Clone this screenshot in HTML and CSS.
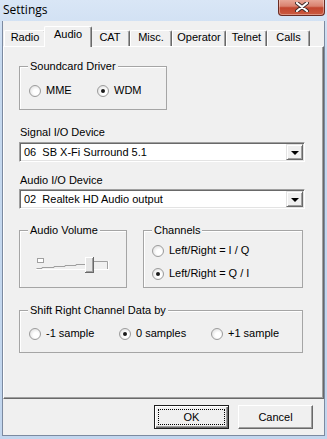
FILE: index.html
```html
<!DOCTYPE html>
<html lang="en">
<head>
    <meta charset="UTF-8">
    <meta name="viewport" content="width=device-width, initial-scale=1.0">
    <title>Settings</title>
    <link rel="stylesheet" href="styles.css">
</head>
<body>
    <div class="window">
        <div class="titlebar">
            <span class="title">Settings</span>
            <div class="close-btn">
                <svg width="14" height="10" viewBox="0 0 14 10">
                    <path d="M2 1 L12 9 M12 1 L2 9" stroke="#3b2a2a" stroke-width="4" stroke-linecap="round"/>
                    <path d="M2 1 L12 9 M12 1 L2 9" stroke="#ffffff" stroke-width="2.2" stroke-linecap="round"/>
                </svg>
            </div>
        </div>

        <div class="client">
            <div class="tabs">
                <div class="tab w-radio">Radio</div>
                <div class="tab active w-audio">Audio</div>
                <div class="tab w-cat">CAT</div>
                <div class="tab w-misc">Misc.</div>
                <div class="tab w-operator">Operator</div>
                <div class="tab w-telnet">Telnet</div>
                <div class="tab w-calls">Calls</div>
            </div>

            <div class="panel">
                <div class="group driver">
                    <span class="group-title">Soundcard Driver</span>
                    <div class="radio-row">
                        <label class="radio w68"><span class="circle"></span>MME</label>
                        <label class="radio checked"><span class="circle"></span>WDM</label>
                    </div>
                </div>

                <div class="field-label">Signal I/O Device</div>
                <div class="combo">
                    <span class="combo-text">06  SB X-Fi Surround 5.1</span>
                    <span class="combo-btn"><i class="arrow"></i></span>
                </div>

                <div class="field-label second">Audio I/O Device</div>
                <div class="combo tight">
                    <span class="combo-text">02  Realtek HD Audio output</span>
                    <span class="combo-btn"><i class="arrow"></i></span>
                </div>

                <div class="group-row">
                    <div class="group volume">
                        <span class="group-title">Audio Volume</span>
                        <svg class="slider" width="74" height="16" viewBox="0 0 74 16">
                            <!-- left end box -->
                            <rect x="1.5" y="1.5" width="6" height="4" fill="#ffffff" stroke="#a0a0a0"/>
                            <!-- tapered track -->
                            <polyline points="0.5,11.5 6,11.5 6,10.5 18,10.5 18,9.5 29,9.5 29,8.5 40,8.5 40,7.5 50,7.5" fill="none" stroke="#a0a0a0"/>
                            <line x1="0" y1="12.5" x2="72" y2="12.5" stroke="#ffffff"/>
                            <polyline points="57,4.5 71.5,4.5 71.5,12" fill="none" stroke="#a0a0a0"/>
                            <line x1="72.5" y1="4" x2="72.5" y2="13" stroke="#ffffff"/>
                            <!-- thumb -->
                            <rect x="49" y="0" width="9" height="16" fill="#696969"/>
                            <rect x="49" y="0" width="8" height="15" fill="#ffffff"/>
                            <rect x="50" y="1" width="7" height="14" fill="#a0a0a0"/>
                            <rect x="50" y="1" width="6" height="13" fill="#e6e6e6"/>
                        </svg>
                    </div>
                    <div class="group channels">
                        <span class="group-title">Channels</span>
                        <label class="radio"><span class="circle"></span>Left/Right = I / Q</label>
                        <label class="radio checked"><span class="circle"></span>Left/Right = Q / I</label>
                    </div>
                </div>

                <div class="group shift">
                    <span class="group-title">Shift Right Channel Data by</span>
                    <div class="radio-grid">
                        <label class="radio"><span class="circle"></span>-1 sample</label>
                        <label class="radio checked"><span class="circle"></span>0 samples</label>
                        <label class="radio"><span class="circle"></span>+1 sample</label>
                    </div>
                </div>
            </div>

            <div class="button-bar">
                <button class="btn default"><span class="focus-rect">OK</span></button>
                <button class="btn">Cancel</button>
            </div>
        </div>
    </div>
</body>
</html>
```

FILE: styles.css
```css
* { margin: 0; padding: 0; box-sizing: border-box; }
body { width: 327px; height: 439px; overflow: hidden; background: #c4d7ee; font-family: "Liberation Sans", Arial, sans-serif; font-size: 11px; color: #000; }

.window { width: 327px; height: 439px; padding: 0 2px 3px 2px; background: linear-gradient(#d9e6f6, #c6d9ef 60px, #c2d6ee); display: flex; flex-direction: column; }
.titlebar { height: 21px; position: relative; flex: none; }
.title { position: absolute; left: 1px; top: 2px; font-family: "Open Sans", "Noto Sans", sans-serif; font-size: 12px; line-height: 16px; color: #000; }
.close-btn { position: absolute; right: 0; top: -1px; width: 47px; height: 17px; border: 1px solid #6b2b22; border-top: none; border-radius: 0 0 4px 4px; background: linear-gradient(#e9ab9c, #d9826f 45%, #c2462f 55%, #cb5a40); box-shadow: inset 0 0 0 1px rgba(255,255,255,0.35); display: flex; align-items: center; justify-content: center; }

.client { flex: 1; background: #f0f0f0; border: 1px solid #7c8aa0; border-top: none; display: flex; flex-direction: column; }

/* tabs */
.tabs { display: flex; align-items: flex-end; padding-left: 1px; margin-top: 5px; height: 20px; position: relative; z-index: 1; }
.tab { height: 16px; line-height: 13px; text-align: center; background: #f0f0f0; border-top: 1px solid #fff; border-left: 1px solid #fff; border-right: 1px solid #696969; box-shadow: inset -1px 0 0 #a0a0a0; border-radius: 2px 2px 0 0; }
.tab.active { height: 21px; padding-top: 1px; margin: 0 -2px -1px -2px; position: relative; }
.w-radio { width: 42px; }
.w-audio { width: 48px; }
.w-cat { width: 40px; }
.w-misc { width: 42px; }
.w-operator { width: 54px; }
.w-telnet { width: 41px; }
.w-calls { width: 43px; }

.panel { height: 353px; border-top: 1px solid #fff; border-left: 1px solid #fff; border-right: 1px solid #696969; border-bottom: 1px solid #696969; box-shadow: inset -1px -1px 0 #a0a0a0; padding-left: 15px; }

/* group boxes */
.group { position: relative; border: 1px solid #a5a5a5; box-shadow: 1px 1px 0 #fff inset; }
.group-title { position: absolute; left: 8px; top: -7px; padding: 0 2px; line-height: 13px; background: #f0f0f0; white-space: nowrap; }
.driver { width: 148px; height: 44px; margin-top: 19px; padding: 17px 0 0 9px; }
.radio-row { display: flex; }
.w68 { width: 68px; }

.radio { display: flex; align-items: center; line-height: 13px; white-space: nowrap; }
.circle { width: 12px; height: 12px; margin-right: 5px; border-radius: 50%; border: 1px solid #9c9c9c; background: radial-gradient(circle at 60% 60%, #ffffff 30%, #e4e4e4 75%, #cfcfcf); position: relative; flex: none; }
.radio.checked .circle::after { content: ""; position: absolute; left: 3px; top: 3px; width: 4px; height: 4px; border-radius: 50%; background: #1b1b1b; }

.field-label { line-height: 13px; margin: 16px 0 0 1px; }
.field-label.second { margin-top: 12px; }

.combo { width: 286px; height: 20px; margin-top: 3px; background: #fff; border-top: 1px solid #a0a0a0; border-left: 1px solid #a0a0a0; border-right: 1px solid #fff; border-bottom: 1px solid #fff; box-shadow: inset 1px 1px 0 #696969, inset -1px -1px 0 #e3e3e3; display: flex; align-items: center; padding: 1px 1px 1px 4px; }
.combo.tight { margin-top: 2px; }
.combo-text { flex: 1; white-space: pre; line-height: 13px; }
.combo-btn { width: 17px; height: 16px; background: #f0f0f0; border-top: 1px solid #e3e3e3; border-left: 1px solid #e3e3e3; border-right: 1px solid #696969; border-bottom: 1px solid #696969; box-shadow: inset 1px 1px 0 #fff, inset -1px -1px 0 #a0a0a0; display: flex; align-items: center; justify-content: center; }
.arrow { width: 0; height: 0; border-left: 4px solid transparent; border-right: 4px solid transparent; border-top: 4px solid #000; margin-top: 1px; }

.group-row { display: flex; gap: 16px; margin-top: 21px; }
.volume { width: 108px; height: 58px; padding: 26px 0 0 16px; }
.slider { display: block; }
.channels { width: 160px; height: 58px; padding: 13px 0 0 8px; display: flex; flex-direction: column; gap: 10px; }

.shift { width: 284px; height: 43px; margin-top: 22px; padding: 16px 0 0 9px; }
.radio-grid { display: grid; grid-template-columns: 90px 92px auto; }

/* buttons */
.button-bar { display: flex; justify-content: flex-end; gap: 9px; padding: 6px 11px 0 0; }
.btn { width: 75px; height: 24px; font-family: "Liberation Sans", Arial, sans-serif; font-size: 11px; color: #000; background: #f0f0f0; border-top: 1px solid #fff; border-left: 1px solid #fff; border-right: 1px solid #696969; border-bottom: 1px solid #696969; box-shadow: inset -1px -1px 0 #a0a0a0; }
.btn.default { border: 1px solid #1e1e1e; box-shadow: inset 1px 1px 0 #fff, inset -1px -1px 0 #696969, inset -2px -2px 0 #a0a0a0; padding: 3px; }
.focus-rect { display: flex; align-items: center; justify-content: center; height: 100%; border: 1px dotted #000; }
```
